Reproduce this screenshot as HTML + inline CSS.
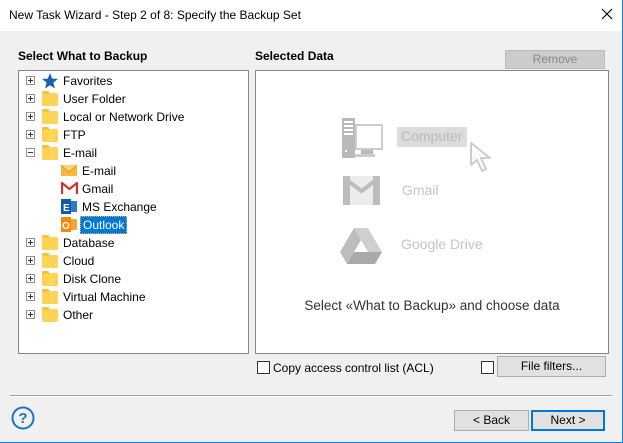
<!DOCTYPE html>
<html><head><meta charset="utf-8"><style>
*{margin:0;padding:0;box-sizing:border-box}
body{width:623px;height:443px;background:#f0f0f0;font-family:"Liberation Sans",sans-serif;font-size:12px;color:#000;position:relative;overflow:hidden}
.win{position:absolute;left:0;top:0;width:623px;height:443px;border-right:1px solid #1a7fd4;border-bottom:1px solid #1a7fd4}
.title{position:absolute;left:0;top:0;width:622px;height:31px;background:#fff}
.title span{position:absolute;left:9px;top:8px;font-size:12px}
.x{position:absolute;left:600px;top:7px;width:14px;height:14px}
.abs{position:absolute}
.h{font-weight:bold;font-size:12px}
.box{position:absolute;background:#fff;border:1px solid #828790}
.row{position:absolute;height:18px;line-height:18px;white-space:nowrap}
.exp{position:absolute;width:9px;height:9px;border:1px solid #919191;background:#fff}
.exp:before{content:"";position:absolute;left:1px;top:3px;width:5px;height:1px;background:#333}
.exp.p:after{content:"";position:absolute;left:3px;top:1px;width:1px;height:5px;background:#333}
.fold{position:absolute;width:16px;height:13px;background:#ffd355;border-radius:1px}
.fold:before{content:"";position:absolute;left:0;top:-2px;width:7px;height:3px;background:#f6c143;border-radius:1px 1px 0 0}
.btn{position:absolute;background:#e1e1e1;border:1px solid #adadad;text-align:center;line-height:18px;font-size:12px}
.cb{position:absolute;width:13px;height:13px;border:1px solid #333;background:#fff}
</style></head><body>
<div class="win"></div>
<div class="title"><span>New Task Wizard - Step 2 of 8: Specify the Backup Set</span>
<svg class="x" viewBox="0 0 14 14"><path d="M2 2L12 12M12 2L2 12" stroke="#000" stroke-width="1.1"/></svg></div>

<div class="abs h" style="left:18px;top:49px">Select What to Backup</div>
<div class="abs h" style="left:255px;top:49px">Selected Data</div>
<div class="btn" style="left:505px;top:50px;width:100px;height:19px;color:#888;background:#ccc;border-color:#bbb;line-height:17px">Remove</div>

<div class="box" style="left:18px;top:70px;width:231px;height:284px">
</div>
<div class="exp p" style="left:26px;top:76px"></div>
<svg class="abs" style="left:41px;top:72px" width="18" height="18" viewBox="0 0 18 18"><path d="M9 1L11.2 6.6 17 6.9 12.4 10.6 14 16.5 9 13.2 4 16.5 5.6 10.6 1 6.9 6.8 6.6Z" fill="#1f5fb0"/></svg>
<div class="row" style="left:63px;top:72px">Favorites</div>

<div class="exp p" style="left:26px;top:94px"></div><div class="fold" style="left:42px;top:93px"></div>
<div class="row" style="left:63px;top:90px">User Folder</div>
<div class="exp p" style="left:26px;top:112px"></div><div class="fold" style="left:42px;top:111px"></div>
<div class="row" style="left:63px;top:108px">Local or Network Drive</div>
<div class="exp p" style="left:26px;top:130px"></div><div class="fold" style="left:42px;top:129px"></div>
<div class="row" style="left:63px;top:126px">FTP</div>
<div class="exp" style="left:26px;top:148px"></div><div class="fold" style="left:42px;top:147px"></div>
<div class="row" style="left:63px;top:144px">E-mail</div>

<svg class="abs" style="left:61px;top:164px" width="17" height="13" viewBox="0 0 17 13"><rect x="0" y="1" width="16" height="11" fill="#f6b73c"/><path d="M0 1L8 8 16 1" fill="#fbd37a" stroke="#e79a1c"/></svg>
<div class="row" style="left:82px;top:162px">E-mail</div>
<svg class="abs" style="left:61px;top:182px" width="17" height="13" viewBox="0 0 17 13"><path d="M1 12V1L8.5 7 16 1V12" fill="none" stroke="#d93025" stroke-width="2.2"/></svg>
<div class="row" style="left:82px;top:180px">Gmail</div>
<svg class="abs" style="left:61px;top:199px" width="17" height="15" viewBox="0 0 17 15"><rect x="6" y="2" width="10" height="11" fill="#2a7ac8"/><rect x="0" y="0" width="10" height="15" fill="#0f5ba9"/><text x="2" y="12" font-size="10" fill="#fff" font-family="Liberation Sans" font-weight="bold">E</text></svg>
<div class="row" style="left:82px;top:198px">MS Exchange</div>
<svg class="abs" style="left:61px;top:217px" width="17" height="15" viewBox="0 0 17 15"><rect x="6" y="2" width="10" height="11" fill="#f6a530"/><rect x="0" y="0" width="10" height="15" fill="#f08a0a"/><text x="1" y="12" font-size="10" fill="#fff" font-family="Liberation Sans" font-weight="bold">O</text></svg>
<div class="row" style="left:80px;top:216px;background:#0078d7;color:#fff;padding:0 2px;border:1px dotted #f3b24a;line-height:16px">Outlook</div>

<div class="exp p" style="left:26px;top:238px"></div><div class="fold" style="left:42px;top:237px"></div>
<div class="row" style="left:63px;top:234px">Database</div>
<div class="exp p" style="left:26px;top:256px"></div><div class="fold" style="left:42px;top:255px"></div>
<div class="row" style="left:63px;top:252px">Cloud</div>
<div class="exp p" style="left:26px;top:274px"></div><div class="fold" style="left:42px;top:273px"></div>
<div class="row" style="left:63px;top:270px">Disk Clone</div>
<div class="exp p" style="left:26px;top:292px"></div><div class="fold" style="left:42px;top:291px"></div>
<div class="row" style="left:63px;top:288px">Virtual Machine</div>
<div class="exp p" style="left:26px;top:310px"></div><div class="fold" style="left:42px;top:309px"></div>
<div class="row" style="left:63px;top:306px">Other</div>

<div class="box" style="left:255px;top:70px;width:354px;height:284px"></div>
<svg class="abs" style="left:342px;top:118px" width="42" height="41" viewBox="0 0 42 41"><rect x="0" y="0" width="13" height="40" fill="#b9b9b9"/><rect x="2" y="3" width="9" height="2" fill="#fff"/><rect x="2" y="7" width="9" height="2" fill="#fff"/><rect x="2" y="11" width="9" height="2" fill="#fff"/><rect x="2" y="15" width="9" height="2" fill="#fff"/><rect x="3" y="32" width="2" height="2" fill="#fff"/><rect x="14" y="7" width="26" height="24" fill="none" stroke="#ccc" stroke-width="2"/><rect x="19" y="32" width="12" height="4" fill="#bbb"/><rect x="13" y="36" width="20" height="3" fill="#ccc"/></svg>
<div class="abs" style="left:397px;top:127px;width:70px;height:20px;background:#dcdcdc;color:#b9b9b9;font-size:14px;line-height:18px;padding-left:4px">Computer</div>
<svg class="abs" style="left:469px;top:141px" width="28" height="35" viewBox="0 0 28 35"><path d="M2 2L2 24 8 19 13 30 17 28 12 17 21 17Z" fill="#fafafa" stroke="#ccc" stroke-width="2" stroke-linejoin="round"/></svg>
<svg class="abs" style="left:343px;top:176px" width="37" height="30" viewBox="0 0 37 30"><rect x="0" y="0" width="37" height="29" fill="#ececec"/><path d="M0 0H7V29H0ZM30 0H37V29H30Z" fill="#bdbdbd"/><path d="M1 2L18.5 15 36 2" fill="none" stroke="#bdbdbd" stroke-width="4"/></svg>
<div class="abs" style="left:402px;top:182px;color:#c4c4c4;font-size:14px">Gmail</div>
<svg class="abs" style="left:340px;top:228px" width="42" height="38" viewBox="0 0 42 38"><path d="M14 0H28L42 24H28Z" fill="#cfcfcf"/><path d="M14 0L0 24 7 36 21 12Z" fill="#bdbdbd"/><path d="M7 36H35L42 24H14Z" fill="#a9a9a9"/></svg>
<div class="abs" style="left:401px;top:236px;color:#c4c4c4;font-size:14px">Google Drive</div>
<div class="abs" style="left:255px;top:298px;width:354px;text-align:center;font-size:13.5px;color:#333">Select «What to Backup» and choose data</div>

<div class="cb" style="left:257px;top:361px"></div>
<div class="abs" style="left:273px;top:361px">Copy access control list (ACL)</div>
<div class="cb" style="left:481px;top:361px"></div>
<div class="btn" style="left:497px;top:356px;width:109px;height:21px">File filters...</div>

<div class="abs" style="left:10px;top:395px;width:602px;height:1px;background:#a0a0a0"></div>
<div class="abs" style="left:10px;top:396px;width:602px;height:1px;background:#fff"></div>

<svg class="abs" style="left:11px;top:406px" width="24" height="24" viewBox="0 0 24 24"><circle cx="12" cy="12" r="10.5" fill="none" stroke="#1a73c8" stroke-width="2"/><text x="12" y="17" text-anchor="middle" font-size="15" font-weight="bold" fill="#1a73c8" font-family="Liberation Sans">?</text></svg>
<div class="btn" style="left:454px;top:410px;width:75px;height:21px">&lt; Back</div>
<div class="btn" style="left:531px;top:410px;width:74px;height:21px;border:2px solid #0078d7;line-height:17px">Next &gt;</div>
</body></html>
